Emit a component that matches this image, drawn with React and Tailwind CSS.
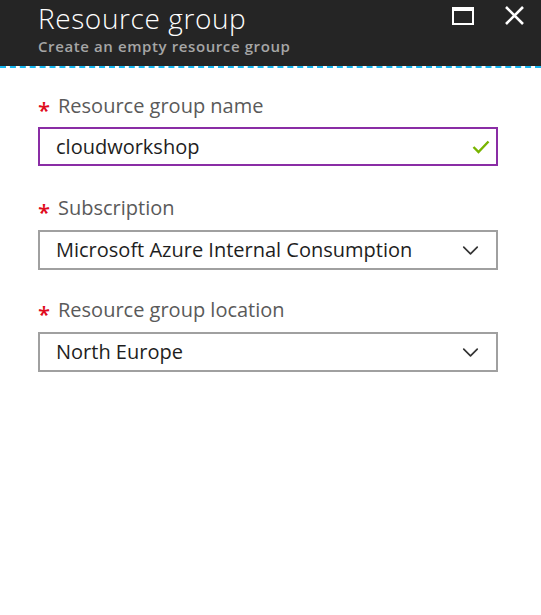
import { ChevronDown } from "lucide-react";

const font = { fontFamily: '"Open Sans", "Noto Sans", sans-serif' };

const Label = ({ children }) => (
  <div className="flex items-center h-[24px] text-[20px] text-[#5a5a5a]">
    <span className="text-[#e00b1c] text-[22px] w-[20px] leading-none pt-[6px] font-semibold">*</span>
    <span>{children}</span>
  </div>
);

const Select = ({ value }) => (
  <div className="mt-[10px] flex h-[40px] items-center justify-between border-2 border-[#a0a0a0] pl-[16px] pr-[12px] text-[20px] text-[#1e1e1e]">
    <span>{value}</span>
    <ChevronDown className="h-[27px] w-[27px] text-[#333]" strokeWidth={1.5} />
  </div>
);

export default function App() {
  return (
    <div className="min-h-screen w-[541px] bg-white" style={font}>
      {/* header */}
      <div className="relative h-[66px] bg-[#252525] pl-[38px]">
        <div className="text-[28px] font-light leading-[36px] tracking-[0.6px] text-white">Resource group</div>
        <div className="text-[15px] font-semibold leading-[20px] tracking-[0.6px] text-[#a6a6a6]">Create an empty resource group</div>
        <div className="absolute right-[16px] top-[5px] flex items-center gap-[30px]">
          <div className="h-[18px] w-[22px] border-2 border-t-[4px] border-white" />
          <svg width="21" height="21" viewBox="0 0 21 21">
            <path d="M2 2 L19 19 M19 2 L2 19" stroke="white" strokeWidth="2.6" />
          </svg>
        </div>
      </div>
      <div className="h-[2px] border-t-2 border-dashed border-[#15b6f0]" />

      <div className="pl-[38px] pr-[43px] pt-[26px]">
        <Label>Resource group name</Label>
        <div className="mt-[9px] flex h-[39px] items-center justify-between border-2 border-[#8a2da5] pl-[16px] pr-[6px] text-[20px] text-[#1e1e1e]">
          <span>cloudworkshop</span>
          <svg width="18" height="14" viewBox="0 0 18 14">
            <path d="M1.5 7 L6.5 12 L16.5 1.5" fill="none" stroke="#78b400" strokeWidth="2.4" />
          </svg>
        </div>

        <div className="mt-[30px]">
          <Label>Subscription</Label>
          <Select value="Microsoft Azure Internal Consumption" />
        </div>

        <div className="mt-[28px]">
          <Label>Resource group location</Label>
          <Select value="North Europe" />
        </div>
      </div>
    </div>
  );
}
